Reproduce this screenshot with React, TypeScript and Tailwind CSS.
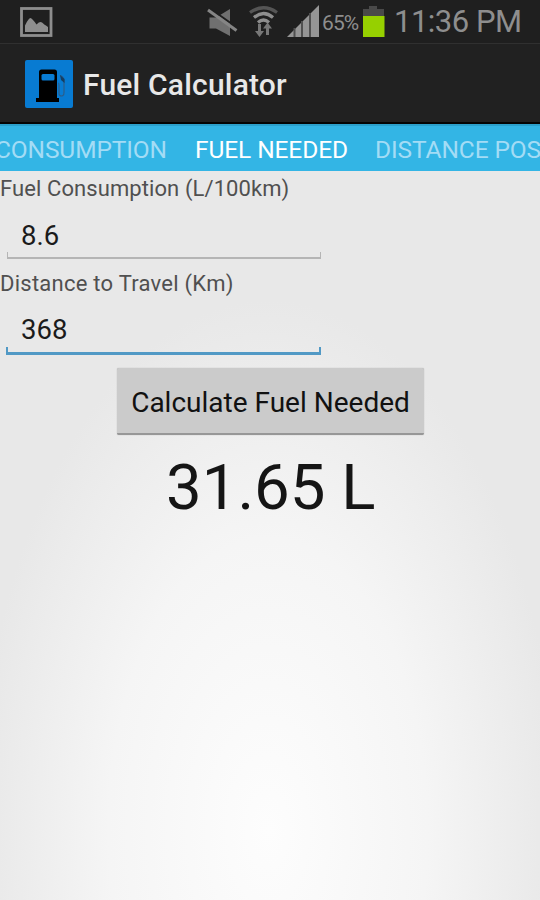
import { useState } from "react";

const tabs = [
  { label: "CONSUMPTION", className: "w-[181px] justify-end pr-[14px] text-[#a3dcf5]" },
  { label: "FUEL NEEDED", className: "w-[181px] justify-center text-white" },
  { label: "DISTANCE POS", className: "w-[178px] pl-[13px] text-[#a3dcf5]" },
];

function StatusBar() {
  return (
    <div className="flex h-[43px] shrink-0 items-start bg-[#1f1f1f] text-[#8e8e8e]">
      <svg className="ml-[20px] mt-[7px] h-[30px] w-[33px]" viewBox="0 0 33 30">
        <rect x="1.5" y="1.5" width="29.5" height="27" fill="none" stroke="currentColor" strokeWidth="2.8" />
        <path d="M5 25V18.5Q8.500 11 10.500 11Q12 11 16.500 17.500Q20 14 22 15.500Q23.500 17 28 20V25Z" fill="currentColor" />
      </svg>
      <svg className="ml-auto mt-[7px] h-[31px] w-[31px]" viewBox="0 0 31 31">
        <path d="M2.5 10.5H9L23 2V29L9 21.500H2.500Z" fill="#707070" />
        <path d="M3 1.500L30 20.500" stroke="#1f1f1f" strokeWidth="2" />
        <path d="M1 3L29.500 23.500" stroke="#858585" strokeWidth="3" />
      </svg>
      <svg className="ml-[11px] mt-[6px] h-[32px] w-[29px]" viewBox="0 0 29 32" fill="none" strokeWidth="3.2">
        <path d="M1 6.500Q14.500-3 28 6.500" stroke="#555" />
        <path d="M5 11.500Q14.500 3.500 24 11.500M9 16.500Q14.500 11.500 20 16.500" stroke="#8e8e8e" />
        <path d="M10.500 18V27M18.500 29V20" stroke="#777" strokeWidth="3" />
        <path d="M6 25H15L10.500 31ZM14 22.500H23L18.500 16.500Z" fill="#777" stroke="none" />
      </svg>
      <svg className="ml-[9px] mt-[5px] h-[32px] w-[33px]" viewBox="0 0 33 32">
        <path d="M0 32L32 0V32Z" fill="#959595" />
        <path d="M7.500 23V32M15 16V32M23 8V32" stroke="#505050" strokeWidth="2" />
      </svg>
      <span className="ml-[2px] mt-[10px] w-[39px] whitespace-nowrap text-[21px] leading-[26px] tracking-[-0.9px]">65%</span>
      <svg className="ml-[2px] mt-[6px] h-[31px] w-[22px]" viewBox="0 0 22 31">
        <path d="M6 0H14V3H21V11H0V3H6Z" fill="#494949" />
        <path d="M0 10H21.500V31H0Z" fill="#96d000" />
      </svg>
      <span className="ml-[9px] mt-[4px] w-[146px] whitespace-nowrap text-[31px] leading-[36px] tracking-[-0.5px]">11:36 PM</span>
    </div>
  );
}

function FuelIcon() {
  return (
    <svg className="mt-px h-[48px] w-[48px]" viewBox="0 0 48 48">
      <rect width="48" height="48" rx="2" fill="#087bd2" />
      <path d="M14 12Q14 9.500 16.500 9.500H29.500Q32 9.500 32 12V38H34V42H11V38H14Z" fill="#000" />
      <rect x="16.500" y="14" width="13" height="6.500" rx="1.500" fill="#087bd2" />
      <path d="M33 23Q34 23 34 25V34Q35 37 38 35.500Q39 35 39 32V20Q38 16 35 15.500" fill="none" stroke="#2d5d87" strokeWidth="1.200" />
      <path d="M35 15L39.500 19V23L36 20Z" fill="#153e62" />
    </svg>
  );
}

type FieldProps = {
  label: string;
  value: string;
  active?: boolean;
  labelClass: string;
  onChange: (value: string) => void;
};

function Field({ label, value, active, labelClass, onChange }: FieldProps) {
  return (
    <label className="block h-[94.500px]">
      <span className={`block h-[36px] whitespace-nowrap pt-[4px] text-[22px] leading-[28px] text-[#505050] ${labelClass}`}>{label}</span>
      <div className={`flex h-[54px] flex-col ${active ? "ml-[6px] w-[315px]" : "ml-[7px] w-[314px]"}`}>
        <input
          value={value}
          onChange={(e) => onChange(e.target.value)}
          className={`h-[45px] w-full bg-transparent pt-[11px] text-[27.500px] text-[#1b1b1b] outline-none ${active ? "pl-[15px]" : "pl-[14px]"}`}
        />
        <div className={active ? "h-[8px] shrink-0 border-x-2 border-b-[3px] border-[#5199c5]" : "h-[7px] shrink-0 border-x border-b-2 border-[#b5b5b5]"} />
      </div>
    </label>
  );
}

export default function App() {
  const [consumption, setConsumption] = useState("8.6");
  const [distance, setDistance] = useState("368");
  const [result, setResult] = useState("31.65");

  const calculate = () => {
    setResult(((Number(consumption) * Number(distance)) / 100).toFixed(2));
  };

  return (
    <div className="flex h-[900px] w-[540px] flex-col overflow-hidden bg-[#e7e7e7] font-['Roboto',sans-serif]">
      <StatusBar />

      {/* Action bar */}
      <header className="flex h-[81px] shrink-0 items-center border-b-2 border-t border-b-[#050505] border-t-[#303030] bg-[#212121] pl-[25px]">
        <FuelIcon />
        <h1 className="ml-[10px] mt-[4px] whitespace-nowrap text-[30px] font-medium leading-[36px] tracking-[0.2px] text-[#e8e8e8]">Fuel Calculator</h1>
      </header>

      {/* Tabs */}
      <nav className="flex h-[47px] shrink-0 items-center overflow-hidden border-t-2 border-[#2ba0cc] bg-[#33b5e5] text-[24.500px] tracking-[-0.1px]">
        {tabs.map((tab) => (
          <button key={tab.label} type="button" className={`flex h-full shrink-0 items-center whitespace-nowrap pt-[3px] ${tab.className}`}>
            {tab.label}
          </button>
        ))}
      </nav>

      <main className="flex flex-1 flex-col bg-[radial-gradient(290px_530px_at_268px_659px,#fdfdfd,#f5f5f5_55%,#e8e8e8)]">
        <Field label="Fuel Consumption (L/100km)" value={consumption} onChange={setConsumption} labelClass="tracking-[0.09px]" />
        <Field label="Distance to Travel (Km)" value={distance} onChange={setDistance} labelClass="tracking-[0.25px]" active />
        <button
          type="button"
          onClick={calculate}
          className="ml-[117px] mt-[8px] h-[67px] w-[307px] whitespace-nowrap rounded-[2px] border-b-2 border-[#979797] bg-[#cbcbcb] pt-[4px] text-[28px] text-[#111] shadow-[0_0_1px_#999]"
        >
          Calculate Fuel Needed
        </button>
        <p className="mt-[13px] whitespace-nowrap pl-[166px] text-[63.500px] leading-[80px] text-[#151515]">{result} L</p>
      </main>
    </div>
  );
}
